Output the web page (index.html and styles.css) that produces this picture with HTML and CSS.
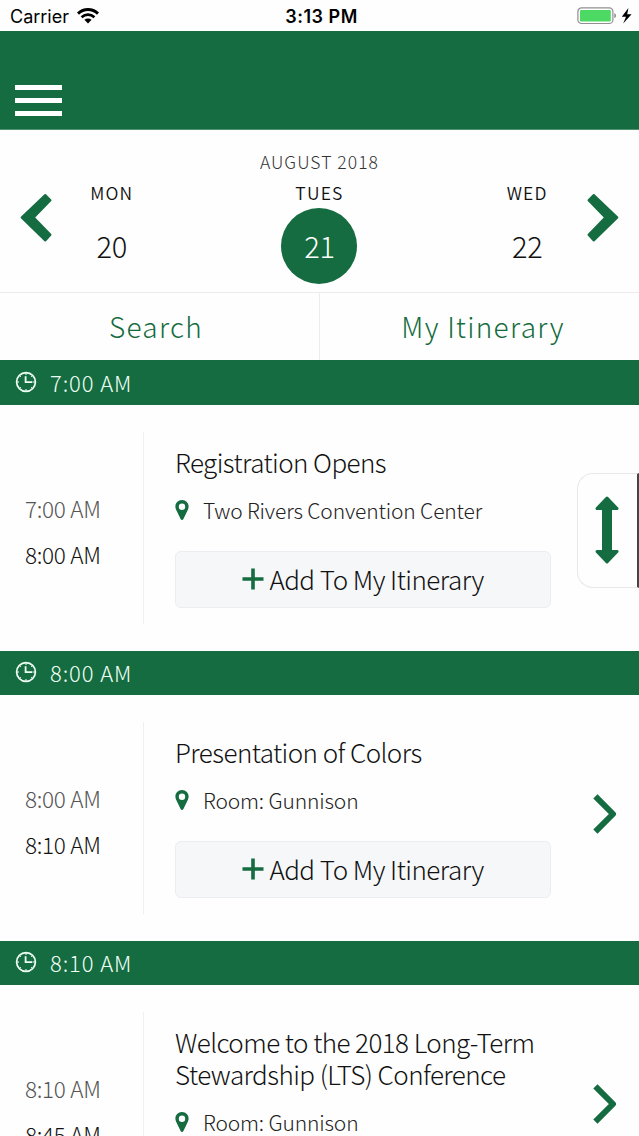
FILE: index.html
```html
<!DOCTYPE html>
<html lang="en">
<head>
    <meta charset="UTF-8">
    <meta name="viewport" content="width=device-width, initial-scale=1.0">
    <title>Schedule</title>
    <link rel="stylesheet" href="styles.css">
</head>
<body>
    <!-- Shared icons -->
    <svg class="sprite" width="0" height="0">
        <symbol id="clock" viewBox="0 0 22 22">
            <circle cx="11" cy="11" r="9.4" fill="none" stroke="currentColor" stroke-width="1.7"/>
            <path d="M10.6 5.2V11.2H17.4" fill="none" stroke="currentColor" stroke-width="1.8"/>
            <path d="M11 2v2M11 18v2M2 11h2M18 11h2M4.6 4.6l1.2 1.2M16.2 16.2l1.2 1.2M4.6 17.4l1.2-1.2M16.2 5.8l1.2-1.2" stroke="currentColor" stroke-width="1"/>
        </symbol>
        <symbol id="pin" viewBox="0 0 14 20">
            <path fill-rule="evenodd" fill="currentColor" d="M7 0C3 0 0.4 3 0.4 6.6C0.4 8.4 1 9.4 1.6 10.7L5.6 19C6.2 20.2 7.8 20.2 8.4 19L12.4 10.7C13 9.4 13.6 8.4 13.6 6.6C13.6 3 11 0 7 0ZM7 3.6A3.2 3.2 0 1 1 7 10A3.2 3.2 0 1 1 7 3.6Z"/>
        </symbol>
        <symbol id="plus" viewBox="0 0 22 22">
            <path d="M11 0.5V21.5M0.5 11H21.5" stroke="currentColor" stroke-width="3.6"/>
        </symbol>
        <symbol id="chevron" viewBox="0 0 24 40">
            <path d="M2.4 2.4L20 20L2.4 37.6" fill="none" stroke="currentColor" stroke-width="6" stroke-linejoin="round"/>
        </symbol>
    </svg>

    <div class="status-bar">
        <div class="carrier">
            <span>Carrier</span>
            <svg width="22" height="16" viewBox="0 0 22 16">
                <path d="M1 5.6C6.8 0.2 15.2 0.2 21 5.6" fill="none" stroke="#000" stroke-width="3"/>
                <path d="M4.6 9.2C8.4 5.8 13.6 5.8 17.4 9.2" fill="none" stroke="#000" stroke-width="2.8"/>
                <path d="M7.4 11.8C9.6 9.9 12.4 9.9 14.6 11.8L11 15.6Z"/>
            </svg>
        </div>
        <div class="clock-time">3:13 PM</div>
        <div class="battery">
            <svg width="56" height="18" viewBox="0 0 56 18">
                <rect x="0.9" y="0.9" width="35" height="15.6" rx="3.6" fill="none" stroke="#909090" stroke-width="1.2"/>
                <rect x="3" y="3" width="30.8" height="11.4" rx="1.2" fill="#4cd964"/>
                <path d="M37.4 6.2C39.4 6.8 39.4 10.4 37.4 11Z" fill="#808080"/>
                <path d="M51.4 1L44.8 9.8H49L46.2 16.6L54.6 7.2H50.2Z"/>
            </svg>
        </div>
    </div>

    <div class="header">
        <div class="menu-icon">
            <span></span>
            <span></span>
            <span></span>
        </div>
    </div>

    <div class="date-picker">
        <svg class="arrow" width="32" height="50" viewBox="0 0 32 50">
            <path d="M24.5 1.2Q25.2 0.6 26 1.2L31.2 6.4Q31.8 7.2 31.2 8L15.2 24.5L31.2 41Q31.8 41.8 31.2 42.6L26 48.2Q25.2 48.8 24.5 48.2L0.9 25.3Q0.2 24.5 0.9 23.7Z" fill="#146c40"/>
        </svg>
        <div class="dates">
            <div class="month">AUGUST 2018</div>
            <div class="days">
                <div class="day">
                    <div class="day-name">MON</div>
                    <div class="day-number">20</div>
                </div>
                <div class="day">
                    <div class="day-name">TUES</div>
                    <div class="day-number selected">21</div>
                </div>
                <div class="day">
                    <div class="day-name">WED</div>
                    <div class="day-number">22</div>
                </div>
            </div>
        </div>
        <svg class="arrow arrow-next" width="32" height="50" viewBox="0 0 32 50">
            <path d="M24.5 1.2Q25.2 0.6 26 1.2L31.2 6.4Q31.8 7.2 31.2 8L15.2 24.5L31.2 41Q31.8 41.8 31.2 42.6L26 48.2Q25.2 48.8 24.5 48.2L0.9 25.3Q0.2 24.5 0.9 23.7Z" fill="#146c40"/>
        </svg>
    </div>

    <div class="tabs">
        <div class="tab">Search</div>
        <div class="tab">My Itinerary</div>
    </div>

    <div class="schedule">
        <div class="time-bar first">
            <svg class="clock"><use href="#clock"/></svg>
            <span>7:00 AM</span>
        </div>
        <div class="event">
            <div class="times">
                <div class="start">7:00 AM</div>
                <div class="end">8:00 AM</div>
            </div>
            <div class="details">
                <div class="title">Registration Opens</div>
                <div class="location"><svg class="pin"><use href="#pin"/></svg><span>Two Rivers Convention Center</span></div>
                <div class="add-button"><svg class="plus"><use href="#plus"/></svg><span>Add To My Itinerary</span></div>
            </div>
        </div>

        <div class="time-bar">
            <svg class="clock"><use href="#clock"/></svg>
            <span>8:00 AM</span>
        </div>
        <div class="event">
            <div class="times">
                <div class="start">8:00 AM</div>
                <div class="end">8:10 AM</div>
            </div>
            <div class="details">
                <div class="title">Presentation of Colors</div>
                <div class="location"><svg class="pin"><use href="#pin"/></svg><span>Room: Gunnison</span></div>
                <div class="add-button"><svg class="plus"><use href="#plus"/></svg><span>Add To My Itinerary</span></div>
            </div>
            <svg class="chevron"><use href="#chevron"/></svg>
        </div>

        <div class="time-bar">
            <svg class="clock"><use href="#clock"/></svg>
            <span>8:10 AM</span>
        </div>
        <div class="event">
            <div class="times">
                <div class="start">8:10 AM</div>
                <div class="end">8:45 AM</div>
            </div>
            <div class="details">
                <div class="title">Welcome to the 2018 Long-Term Stewardship (LTS) Conference</div>
                <div class="location"><svg class="pin"><use href="#pin"/></svg><span>Room: Gunnison</span></div>
            </div>
            <svg class="chevron"><use href="#chevron"/></svg>
        </div>
    </div>

    <!-- Floating scroll handle -->
    <div class="scroll-handle">
        <svg width="24" height="68" viewBox="0 0 24 68">
            <path d="M12 2L22 12.6H2Z M12 66L22 55.4H2Z" fill="#146c40" stroke="#146c40" stroke-width="3" stroke-linejoin="round"/>
            <path d="M12 8V60" stroke="#146c40" stroke-width="10"/>
        </svg>
    </div>
</body>
</html>
```

FILE: styles.css
```css
* {
    box-sizing: border-box;
}

body {
    margin: 0;
    height: 1136px;
    overflow: hidden;
    background-color: #fefefe;
    color: #111;
    font-family: "Noto Sans CJK SC", "Open Sans", sans-serif;
    font-weight: 300;
    white-space: nowrap;
}

svg {
    display: block;
    flex: none;
}

.sprite {
    position: absolute;
}

/* Status bar */
.status-bar {
    display: grid;
    grid-template-columns: 1fr auto 1fr;
    align-items: center;
    height: 31px;
    padding: 1px 6px 0 10px;
    font-family: Inter, "Liberation Sans", sans-serif;
    font-size: 18px;
    font-weight: 400;
    color: #000;
}

.carrier {
    display: flex;
    align-items: center;
    gap: 8px;
}

.clock-time {
    font-weight: 600;
    letter-spacing: 0.5px;
}

.battery {
    justify-self: end;
}

.header {
    height: 99px;
    padding: 54px 15px 0;
    background-color: #146c40;
    border-bottom: 1px solid #4f9170;
}

.menu-icon {
    display: flex;
    flex-direction: column;
    gap: 8px;
    width: 47px;
}

.menu-icon span {
    height: 5px;
    background-color: #fff;
}

/* Date picker */
.date-picker {
    display: flex;
    height: 163px;
    padding: 0 20px;
    border-bottom: 1px solid #eeeaf0;
}

.arrow {
    margin-top: 63px;
}

.arrow-next {
    transform: scaleX(-1);
}

.dates {
    flex: 1;
    margin: 0 -44px;
    padding-top: 19px;
    text-align: center;
}

.month {
    height: 26px;
    line-height: 26px;
    font-size: 17.5px;
    letter-spacing: 1.05px;
    color: #333;
}

.days {
    display: grid;
    grid-template-columns: repeat(3, 1fr);
    padding-top: 6px;
}

.day-name {
    height: 24px;
    line-height: 23px;
    font-size: 17.5px;
    font-weight: 350;
    letter-spacing: 1.2px;
}

.day-number {
    width: 76px;
    height: 76px;
    margin: 3px auto 0;
    border-radius: 50%;
    line-height: 75px;
    font-size: 29px;
    letter-spacing: -0.3px;
}

.day-number.selected {
    background-color: #146c40;
    color: #fff;
}

/* Search / itinerary tabs */
.tabs {
    display: flex;
    height: 67px;
}

.tab {
    flex: 1;
    padding-right: 7px;
    line-height: 67px;
    font-size: 28px;
    letter-spacing: 1.3px;
    text-align: center;
    color: #146c40;
}

.tab + .tab {
    padding: 0 0 0 7px;
    border-left: 1px solid #eeeaf0;
}

/* Schedule */
.time-bar {
    display: flex;
    align-items: center;
    gap: 13px;
    height: 44px;
    padding: 0 0 2px 15px;
    background-color: #146c40;
    color: #f0fff6;
    font-size: 22px;
    letter-spacing: 0.9px;
}

.time-bar.first {
    height: 45px;
}

.clock {
    width: 22px;
    height: 22px;
}

.event {
    display: flex;
    min-height: 246px;
    padding: 27px 0;
}

.times {
    width: 144px;
    padding: 53px 0 0 25px;
    border-right: 1px solid #f0f0f2;
    font-size: 22.5px;
    line-height: 46px;
    letter-spacing: -0.3px;
}

.start {
    color: #555;
}

.details {
    width: 407px;
    padding: 14px 0 0 31px;
}

.title {
    line-height: 32px;
    font-size: 26px;
    letter-spacing: -0.56px;
    white-space: normal;
}

.location {
    display: flex;
    align-items: center;
    gap: 14px;
    height: 64px;
    font-size: 21px;
    letter-spacing: -0.15px;
    color: #222;
}

.pin {
    width: 14px;
    height: 20px;
    color: #146c40;
}

.add-button {
    display: flex;
    align-items: center;
    justify-content: center;
    gap: 5px;
    height: 57px;
    margin-top: 9px;
    padding-bottom: 2px;
    border: 1px solid #ecedf0;
    border-radius: 6px;
    background-color: #f6f7f9;
    font-size: 26px;
    letter-spacing: -0.53px;
}

.plus {
    width: 22px;
    height: 22px;
    color: #146c40;
}

.chevron {
    width: 24px;
    height: 40px;
    margin: 72px 0 0 42px;
    color: #146c40;
}

.scroll-handle {
    position: absolute;
    top: 473px;
    right: 0;
    display: flex;
    align-items: center;
    justify-content: center;
    width: 62px;
    height: 115px;
    padding: 0 1px 2px 0;
    border: 1px solid #e9e6ec;
    border-right: 2px solid #444;
    border-radius: 16px 0 0 16px;
    background-color: #fefefe;
}
```
